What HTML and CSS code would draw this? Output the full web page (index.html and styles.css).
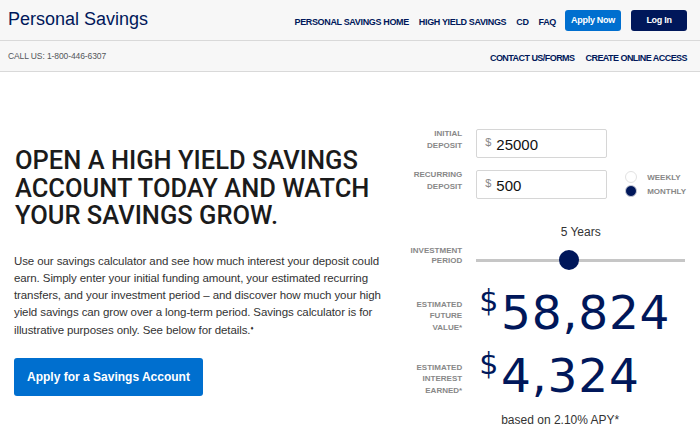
FILE: index.html
```html
<!DOCTYPE html>
<html lang="en">
<head>
    <meta charset="utf-8">
    <title>Personal Savings - Savings Calculator</title>
    <link rel="stylesheet" href="styles.css">
</head>
<body>

    <div class="topbar">
        <div class="brand">Personal Savings</div>
        <ul class="nav">
            <li><a href="#">Personal Savings Home</a></li>
            <li><a href="#">High Yield Savings</a></li>
            <li><a href="#">CD</a></li>
            <li><a href="#">FAQ</a></li>
        </ul>
        <a class="btn-small btn-apply" href="#">Apply Now</a>
        <a class="btn-small btn-login" href="#">Log In</a>
    </div>

    <div class="subbar">
        <div class="call">CALL US: 1-800-446-6307</div>
        <ul class="nav">
            <li><a href="#">Contact Us/Forms</a></li>
            <li><a href="#">Create Online Access</a></li>
        </ul>
    </div>

    <div class="main">

        <div class="intro">
            <h1>OPEN A HIGH YIELD SAVINGS ACCOUNT TODAY AND WATCH YOUR SAVINGS GROW.</h1>
            <p>Use our savings calculator and see how much interest your deposit could earn. Simply enter your initial funding amount, your estimated recurring transfers, and your investment period &ndash; and discover how much your high yield savings can grow over a long-term period. Savings calculator is for illustrative purposes only. See below for details.<span class="mark">&#9830;</span></p>
            <a class="btn-big" href="#">Apply for a Savings Account</a>
        </div>

        <div class="calc">
            <div class="row">
                <div class="label">INITIAL<br>DEPOSIT</div>
                <div class="field"><span class="cur">$</span>25000</div>
            </div>

            <div class="row row-second">
                <div class="label">RECURRING<br>DEPOSIT</div>
                <div class="field"><span class="cur">$</span>500</div>
                <div class="radios">
                    <div class="radio"><span class="dot"></span>WEEKLY</div>
                    <div class="radio"><span class="dot on"></span>MONTHLY</div>
                </div>
            </div>

            <div class="row row-period">
                <div class="label label-period">INVESTMENT<br>PERIOD</div>
                <div class="slider">
                    <div class="years">5 Years</div>
                    <div class="track"><span class="thumb"></span></div>
                </div>
            </div>

            <div class="row row-result">
                <div class="label label-result">ESTIMATED<br>FUTURE<br>VALUE*</div>
                <div class="amount"><span class="sign">$</span>58,824</div>
            </div>

            <div class="row row-result row-interest">
                <div class="label label-result">ESTIMATED<br>INTEREST<br>EARNED*</div>
                <div class="amount"><span class="sign">$</span>4,324</div>
            </div>

            <div class="apy">based on 2.10% APY*</div>
        </div>

    </div> <!-- /main -->
</body>
</html>
```

FILE: styles.css
```css
html {
	font-family: "Liberation Sans", Arial, sans-serif;
}
body {
	margin: 0;
	background-color: #fff;
	color: #333;
}
a {
	text-decoration: none;
}
ul {
	margin: 0;
	padding: 0;
	list-style: none;
}
.topbar {
	display: flex;
	align-items: center;
	height: 40px;
	padding: 0 13px 0 8px;
	background-color: #f7f7f7;
	border-bottom: 1px solid #d9d9d9;
}
.brand {
	flex: 1;
	font-size: 18px;
	color: #00175a;
	padding-bottom: 2px;
}
.nav {
	display: flex;
	gap: 10px;
}
.nav a {
	font-size: 9px;
	font-weight: bold;
	text-transform: uppercase;
	letter-spacing: -0.35px;
	color: #00175a;
}
.btn-small {
	display: flex;
	align-items: center;
	justify-content: center;
	width: 56px;
	height: 21px;
	margin-left: 9px;
	border-radius: 3px;
	font-size: 9px;
	font-weight: bold;
	color: #fff;
	letter-spacing: -0.3px;
}
.btn-apply {
	background-color: #006fcf;
}
.btn-login {
	margin-left: 10px;
	background-color: #00175a;
}
.subbar {
	display: flex;
	align-items: center;
	justify-content: space-between;
	height: 30px;
	padding: 0 13px 0 8px;
	background-color: #f7f7f7;
	border-bottom: 1px solid #d9d9d9;
}
.subbar .nav {
	gap: 11px;
}
.subbar .nav a {
	letter-spacing: -0.55px;
}
.call {
	font-size: 8.5px;
	color: #53565a;
	letter-spacing: -0.1px;
}
.main {
	display: flex;
	padding: 0 14px;
}
.intro {
	width: 376px;
	padding-top: 75px;
}
.intro h1 {
	margin: 0 0 0 1px;
	font-family: Roboto, sans-serif;
	font-weight: 500;
	font-size: 25.5px;
	line-height: 27.5px;
	color: #1b1b1b;
}
.intro p {
	margin: 23px 0 0;
	width: 372px;
	font-size: 11.5px;
	line-height: 17.3px;
	letter-spacing: -0.1px;
	color: #333;
}
.mark {
	font-size: 6px;
	vertical-align: 4px;
	line-height: 1;
}
.btn-big {
	display: flex;
	align-items: center;
	justify-content: center;
	width: 189px;
	height: 38px;
	margin-top: 19px;
	border-radius: 3px;
	background-color: #006fcf;
	color: #fff;
	font-size: 12px;
	font-weight: bold;
}
.calc {
	flex: 1;
	padding-top: 56px;
}
.row {
	display: flex;
	align-items: center;
}
.label {
	width: 73px;
	margin-right: 14px;
	text-align: right;
	font-size: 8px;
	font-weight: bold;
	line-height: 12px;
	color: #888;
	padding-bottom: 6px;
}
.field {
	display: flex;
	align-items: center;
	box-sizing: border-box;
	width: 131px;
	height: 29px;
	padding: 2px 0 0 8px;
	border: 1px solid #d6d6d6;
	border-radius: 2px;
	font-size: 15px;
	color: #111;
}
.cur {
	align-self: flex-start;
	margin: 4px 5px 0 0;
	font-size: 11px;
	color: #888;
}
.row-second {
	margin-top: 11px;
}
.radios {
	margin-left: 18px;
}
.radio {
	display: flex;
	align-items: center;
	height: 14px;
	font-size: 8px;
	font-weight: bold;
	color: #888;
}
.dot {
	box-sizing: border-box;
	width: 12px;
	height: 12px;
	margin-right: 10px;
	border: 1px solid #e2e2e2;
	border-radius: 50%;
	background-color: #fff;
}
.dot.on {
	background-color: #00175a;
	border-color: #c9cbd6;
}
.row-period {
	align-items: flex-end;
	margin-top: 25px;
}
.label-period {
	line-height: 10px;
	padding-bottom: 4px;
}
.years {
	text-align: center;
	font-size: 12px;
	line-height: 16px;
	color: #333;
	margin-bottom: 10px;
}
.slider {
	width: 209px;
}
.track {
	position: relative;
	height: 20px;
}
.track:before {
	content: "";
	position: absolute;
	left: 0;
	right: 0;
	top: 9px;
	height: 3px;
	background-color: #c6c6c6;
}
.thumb {
	position: absolute;
	left: 83px;
	top: 0;
	width: 20px;
	height: 20px;
	border-radius: 50%;
	background-color: #00175a;
}
.row-result {
	margin-top: 18px;
}
.row-interest {
	margin-top: 13px;
}
.label-result {
	line-height: 11.3px;
	padding-bottom: 0;
	padding-top: 6px;
}
.amount {
	display: flex;
	align-items: flex-start;
	margin-left: 3px;
	font-family: "DejaVu Sans", sans-serif;
	font-size: 47px;
	line-height: 50px;
	letter-spacing: 0.8px;
	color: #00175a;
}
.sign {
	font-size: 30px;
	line-height: 30px;
	margin: -2px 2px 0 0;
}
.apy {
	margin: 11px 0 0 112px;
	font-size: 12px;
	line-height: 16px;
	color: #333;
}
```
